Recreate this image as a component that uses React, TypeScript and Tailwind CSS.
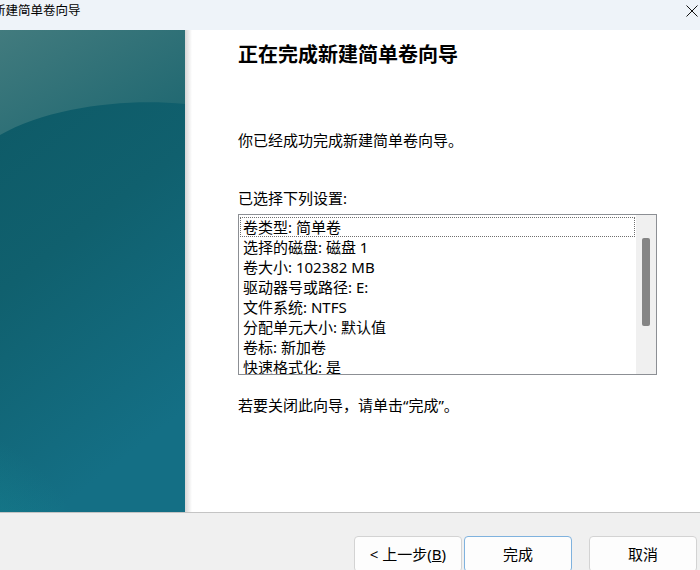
import { ReactNode } from "react";

const settings = [
    "卷类型: 简单卷",
    "选择的磁盘: 磁盘 1",
    "卷大小: 102382 MB",
    "驱动器号或路径: E:",
    "文件系统: NTFS",
    "分配单元大小: 默认值",
    "卷标: 新加卷",
    "快速格式化: 是",
];

function SidePanel() {
    // teal wizard artwork on the left
    return (
        <svg width="185" height="482" viewBox="0 0 185 482" className="block shrink-0">
            <defs>
                <linearGradient id="base" x1="0" y1="0" x2="0.3" y2="1">
                    <stop offset="0" stopColor="#0d5864" />
                    <stop offset="0.5" stopColor="#10606e" />
                    <stop offset="1" stopColor="#146f85" />
                </linearGradient>
                <linearGradient id="top" x1="0" y1="0" x2="1" y2="1">
                    <stop offset="0" stopColor="#427b7e" />
                    <stop offset="1" stopColor="#1c6670" />
                </linearGradient>
                <radialGradient id="glow" cx="0" cy="1" r="1">
                    <stop offset="0" stopColor="#17939a" stopOpacity="0.75" />
                    <stop offset="1" stopColor="#17939a" stopOpacity="0" />
                </radialGradient>
            </defs>
            <rect width="185" height="482" fill="url(#base)" />
            <path d="M0 0 H185 V74 C130 68 50 76 0 105 Z" fill="url(#top)" />
            <ellipse cx="0" cy="482" rx="100" ry="100" fill="url(#glow)" />
        </svg>
    );
}

function Button({ children, primary }: { children: ReactNode; primary?: boolean }) {
    return (
        <button
            className={
                primary
                    ? "w-[108px] h-[36px] rounded-[4px] border border-[#7fb2de] bg-[#fdfdfd] text-[15px] text-black"
                    : "w-[108px] h-[36px] rounded-[4px] border border-[#d3d3d3] bg-[#fdfdfd] text-[15px] text-black"
            }
        >
            {children}
        </button>
    );
}

export default function App() {
    return (
        <div
            className="w-[700px] h-[570px] overflow-hidden flex flex-col bg-white text-black"
            style={{ fontFamily: '"Noto Sans", "Noto Sans CJK SC", sans-serif' }}
        >
            {/* -----TITLE BAR----- */}
            <div className="h-[30px] shrink-0 bg-[#eef3f9] flex items-start justify-between">
                <span className="-ml-[7px] mt-[1px] text-[12.5px] leading-[20px]">新建简单卷向导</span>
                <svg width="12" height="12" viewBox="0 0 12 12" className="mt-[5px] mr-[2px]">
                    <path d="M0.5 0.5 L11.5 11.5 M11.5 0.5 L0.5 11.5" stroke="#111" strokeWidth="1" />
                </svg>
            </div>

            {/* -----BODY----- */}
            <div className="h-[482px] shrink-0 flex">
                <SidePanel />
                <div className="w-[7px] shrink-0 bg-gradient-to-r from-[#d6d6d6] to-white" />
                <div className="flex-1 pl-[46px] flex flex-col">
                    <h1 className="mt-[11px] text-[20px] leading-[28px] font-bold">正在完成新建简单卷向导</h1>
                    <p className="mt-[61px] text-[15px] leading-[20px]">你已经成功完成新建简单卷向导。</p>
                    <p className="mt-[38px] text-[15px] leading-[20px]">已选择下列设置:</p>

                    <div className="mt-[6px] w-[419px] h-[161px] border border-[#8c8f94] flex overflow-hidden">
                        <ul className="flex-1 pt-[2px] pl-[1px] pr-[1px] text-[15px]">
                            {settings.map((item, index) => (
                                <li
                                    key={index}
                                    className={
                                        index === 0
                                            ? "h-[20px] leading-[19px] pl-[2px] border border-dotted border-[#6f6f6f] whitespace-nowrap"
                                            : "h-[20px] leading-[19px] pl-[2px] border border-transparent whitespace-nowrap"
                                    }
                                >
                                    {item}
                                </li>
                            ))}
                        </ul>
                        <div className="w-[20px] shrink-0 bg-[#f0f0f0] pt-[23px] flex justify-center">
                            <div className="w-[8px] h-[88px] rounded-[2px] bg-[#858585]" />
                        </div>
                    </div>

                    <p className="mt-[20px] text-[15px] leading-[20px]">若要关闭此向导，请单击“完成”。</p>
                </div>
            </div>

            {/* -----FOOTER----- */}
            <div className="flex-1 border-t border-[#c4c4c4] bg-[#f0f0f0] flex justify-end items-start pt-[23px] pr-[3px]">
                <div className="flex">
                    <Button>
                        &lt; 上一步(<span className="underline">B</span>)
                    </Button>
                    <div className="ml-[2px]">
                        <Button primary>完成</Button>
                    </div>
                    <div className="ml-[17px]">
                        <Button>取消</Button>
                    </div>
                </div>
            </div>
        </div>
    );
}
